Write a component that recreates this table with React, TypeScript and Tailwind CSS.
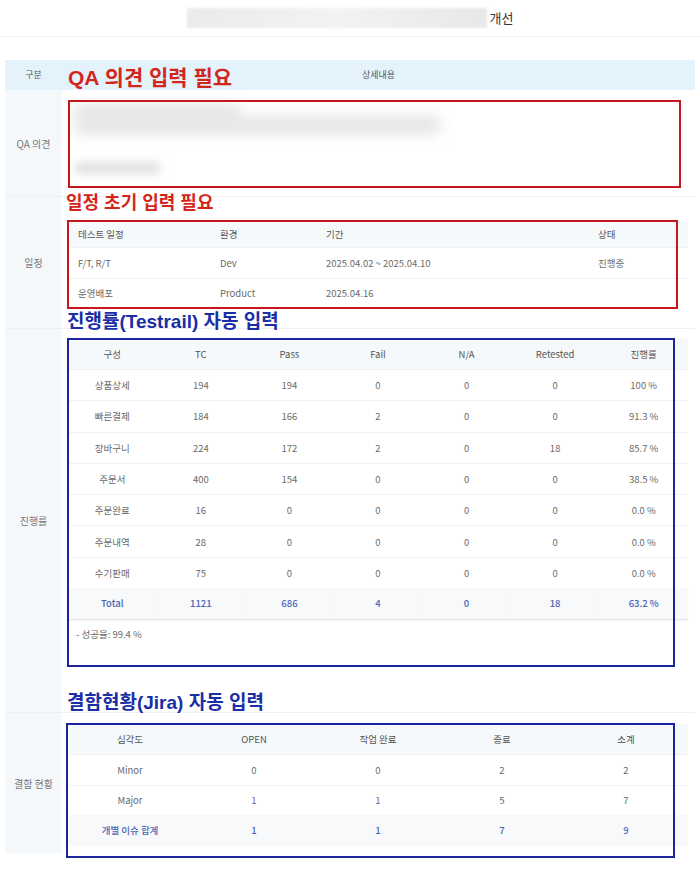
import React from 'react';

const progressRows = [
  ['상품상세', '194', '194', '0', '0', '0', '100 %'],
  ['빠른결제', '184', '166', '2', '0', '0', '91.3 %'],
  ['장바구니', '224', '172', '2', '0', '18', '85.7 %'],
  ['주문서', '400', '154', '0', '0', '0', '38.5 %'],
  ['주문완료', '16', '0', '0', '0', '0', '0.0 %'],
  ['주문내역', '28', '0', '0', '0', '0', '0.0 %'],
  ['수기판매', '75', '0', '0', '0', '0', '0.0 %'],
];

const defectRows = [
  ['Minor', '0', '0', '2', '2'],
  ['Major', '1', '1', '5', '7'],
];

function Label({ children }: { children: React.ReactNode }) {
  return (
    <div className="flex items-center justify-center bg-[#f4f8fb] text-[10px] text-[#777] border-b border-[#edf0f2]">
      {children}
    </div>
  );
}

export default function App() {
  return (
    <div className="relative w-[700px] h-[869px] bg-white font-['Noto_Sans_CJK_KR',sans-serif] text-[#6a6a6a] overflow-hidden">
      {/* page title */}
      <div className="flex h-[37px] items-center justify-center gap-[3px] border-b border-[#f1f1f1]">
        <div className="h-[20px] w-[300px] bg-gradient-to-r from-[#ebebeb] via-[#f3f3f3] to-[#e8e8e8] blur-[1px]" />
        <span className="text-[13px] text-[#333]">개선</span>
      </div>

      <div className="mx-[5px] mt-[23px] grid grid-cols-[57px_1fr]">
        {/* header */}
        <div className="flex h-[30px] items-center justify-center bg-[#e3f2fb] text-[9px] text-[#555]">구분</div>
        <div className="flex h-[30px] items-center justify-center bg-[#e3f2fb] text-[9px] text-[#555]">상세내용</div>

        {/* QA opinion */}
        <Label>QA 의견</Label>
        <div className="h-[107px] border-b border-[#edf0f2] pl-[13px] pt-[14px]">
          <div className="h-[16px] w-[165px] rounded bg-[#e8e8e8] blur-[6px]" />
          <div className="mt-[-4px] h-[18px] w-[365px] rounded bg-[#e4e4e4] blur-[7px]" />
          <div className="mt-[28px] h-[12px] w-[85px] rounded bg-[#e0e0e0] blur-[5px]" />
        </div>

        {/* schedule */}
        <Label>일정</Label>
        <div className="h-[132px] border-b border-[#edf0f2] pl-[6px] pr-[7px] pt-[24px]">
          <div className="grid grid-cols-[142px_106px_272px_1fr] text-[9.5px]">
            {['테스트 일정', '환경', '기간', '상태'].map((h) => (
              <div key={h} className="flex h-[27px] items-center bg-[#f6f9fb] pl-[10px] text-[#555] border-b border-[#eef1f3]">{h}</div>
            ))}
            {['F/T, R/T', 'Dev', '2025.04.02 ~ 2025.04.10', '진행중'].map((c, i) => (
              <div key={i} className="flex h-[31px] items-center pl-[10px] border-b border-[#eef1f3]">{c}</div>
            ))}
            {['운영배포', 'Product', '2025.04.16', ''].map((c, i) => (
              <div key={i} className="flex h-[29px] items-center pl-[10px]">{c}</div>
            ))}
          </div>
        </div>

        {/* progress */}
        <Label>진행률</Label>
        <div className="h-[384px] border-b border-[#edf0f2] pl-[6px] pr-[7px] pt-[10px]">
          <div className="grid grid-cols-7 text-[9.5px]">
            {['구성', 'TC', 'Pass', 'Fail', 'N/A', 'Retested', '진행률'].map((h) => (
              <div key={h} className="flex h-[30px] items-center justify-center bg-[#f6f9fb] text-[#555]">{h}</div>
            ))}
            {progressRows.map((r) =>
              r.map((c, i) => (
                <div key={r[0] + i} className="flex h-[31.3px] items-center justify-center border-t border-[#f0f2f4]">{c}</div>
              ))
            )}
            {['Total', '1121', '686', '4', '0', '18', '63.2 %'].map((c, i) => (
              <div key={'t' + i} className="flex h-[32px] items-center justify-center bg-[#f8f9fa] font-medium text-[#4a66b8] border-b border-[#e6e8ea] shadow-[0_1px_1px_rgba(0,0,0,0.04)]">{c}</div>
            ))}
          </div>
          <div className="pl-[8px] pt-[7px] text-[9.5px]">- 성공율: 99.4 %</div>
        </div>

        {/* defects */}
        <div className="flex items-center justify-center bg-[#f4f8fb] text-[10px] text-[#777]">결함 현황</div>
        <div className="h-[140px] pl-[6px] pr-[7px] pt-[11px]">
          <div className="grid grid-cols-5 text-[9.5px]">
            {['심각도', 'OPEN', '작업 완료', '종료', '소계'].map((h) => (
              <div key={h} className="flex h-[30px] items-center justify-center bg-[#f6f9fb] text-[#555]">{h}</div>
            ))}
            {defectRows.map((r) =>
              r.map((c, i) => (
                <div key={r[0] + i} className="flex h-[30.5px] items-center justify-center border-t border-[#f0f2f4]">{c}</div>
              ))
            )}
            {['개별 이슈 합계', '1', '1', '7', '9'].map((c, i) => (
              <div key={'d' + i} className="flex h-[31px] items-center justify-center bg-[#f8f9fa] font-medium text-[#4a66b8]">{c}</div>
            ))}
          </div>
        </div>
      </div>

      {/* review annotations */}
      <div className="absolute left-[68px] top-[67px] text-[21px] font-bold leading-none text-[#d3261b] font-['Liberation_Sans','Noto_Sans_CJK_KR',sans-serif]">QA 의견 입력 필요</div>
      <div className="absolute left-[68px] top-[100px] h-[88px] w-[613px] border-2 border-[#c8161d]" />

      <div className="absolute left-[66px] top-[194px] text-[18px] font-bold leading-none text-[#d3261b] font-['Liberation_Sans','Noto_Sans_CJK_KR',sans-serif]">일정 초기 입력 필요</div>
      <div className="absolute left-[67px] top-[220px] h-[89px] w-[611px] border-2 border-[#c8161d]" />

      <div className="absolute left-[67px] top-[312px] text-[19px] font-bold leading-none text-[#1a2ea6] font-['Liberation_Sans','Noto_Sans_CJK_KR',sans-serif]">진행률(Testrail) 자동 입력</div>
      <div className="absolute left-[67px] top-[338px] h-[329px] w-[608px] border-2 border-[#1a249c]" />

      <div className="absolute left-[67px] top-[693px] text-[19px] font-bold leading-none text-[#1a2ea6] font-['Liberation_Sans','Noto_Sans_CJK_KR',sans-serif]">결함현황(Jira) 자동 입력</div>
      <div className="absolute left-[66px] top-[723px] h-[135px] w-[609px] border-2 border-[#1a249c]" />
    </div>
  );
}
